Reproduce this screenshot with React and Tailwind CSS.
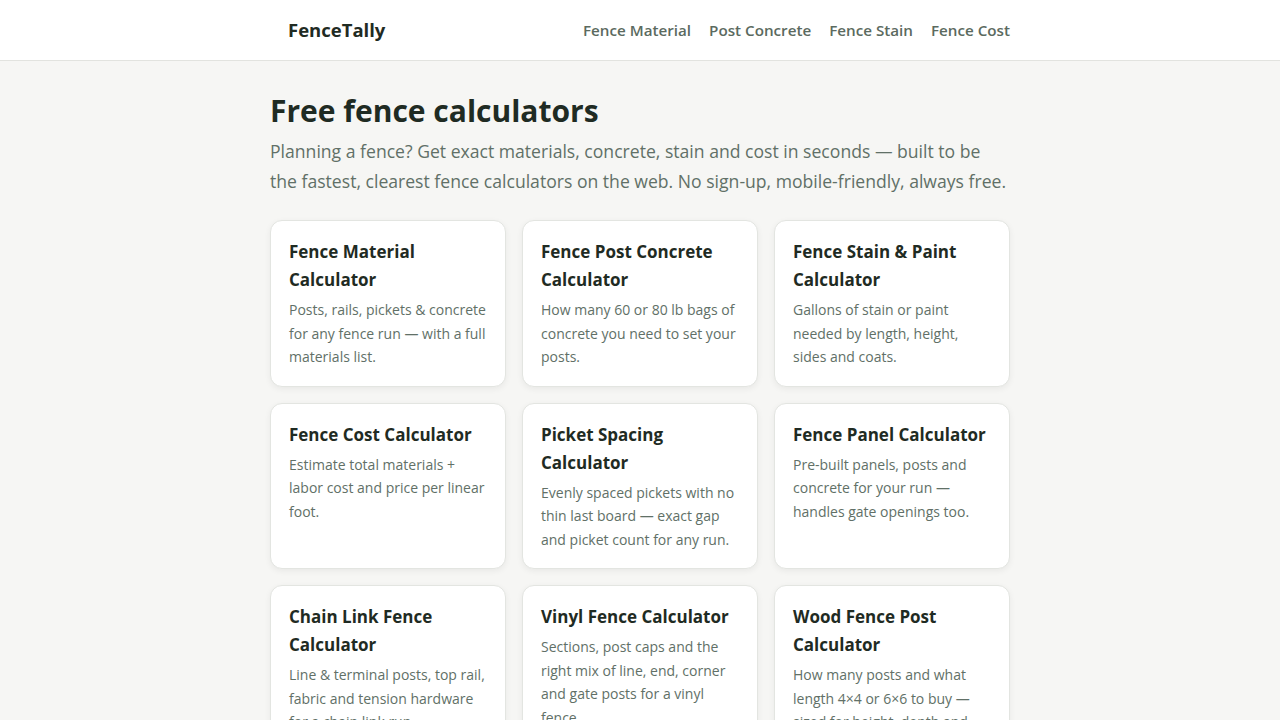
import React from 'react';

const links = ['Fence Material', 'Post Concrete', 'Fence Stain', 'Fence Cost'];

const calculators = [
    {title: 'Fence Material Calculator', desc: 'Posts, rails, pickets & concrete for any fence run — with a full materials list.'},
    {title: 'Fence Post Concrete Calculator', desc: 'How many 60 or 80 lb bags of concrete you need to set your posts.'},
    {title: 'Fence Stain & Paint Calculator', desc: 'Gallons of stain or paint needed by length, height, sides and coats.'},
    {title: 'Fence Cost Calculator', desc: 'Estimate total materials + labor cost and price per linear foot.'},
    {title: 'Picket Spacing Calculator', desc: 'Evenly spaced pickets with no thin last board — exact gap and picket count for any run.'},
    {title: 'Fence Panel Calculator', desc: 'Pre-built panels, posts and concrete for your run — handles gate openings too.'},
    {title: 'Chain Link Fence Calculator', desc: 'Line & terminal posts, top rail, fabric and tension hardware for a chain link run.'},
    {title: 'Vinyl Fence Calculator', desc: 'Sections, post caps and the right mix of line, end, corner and gate posts for a vinyl fence.'},
    {title: 'Wood Fence Post Calculator', desc: 'How many posts and what length 4×4 or 6×6 to buy — sized for height, depth and frost line.'},
];

const CalcCard = ({title, desc}) => {
    return (
        <a href="#" className="block bg-white rounded-xl border border-[#e3e5e1] shadow-[0_2px_6px_rgba(0,0,0,0.06)] px-[18px] pt-[17px] pb-[17px]">
            <h2 className="text-[17px] leading-[28px] font-bold text-[#1f2b23]">{title}</h2>
            <p className="mt-[4px] text-[14px] leading-[23.5px] text-[#617067]">{desc}</p>
        </a>
    );
};

export default function App() {
    return (
        <div className="min-h-screen bg-[#f6f6f4] font-['Open_Sans',sans-serif]">
            <header className="bg-white border-b border-[#e2e3df]">
                <div className="w-[740px] mx-auto h-[60px] flex items-center justify-between pl-[18px]">
                    <a href="#" className="text-[18.5px] font-bold text-[#1f2b23]">FenceTally</a>
                    <nav className="flex items-center gap-[18px]">
                        {links.map((l) => (
                            <a key={l} href="#" className="text-[15.2px] font-semibold text-[#5b6a60]">{l}</a>
                        ))}
                    </nav>
                </div>
            </header>

            <main className="w-[740px] mx-auto pt-[30px] pb-12">
                <h1 className="text-[30px] leading-[40px] font-bold text-[#1f2b23]">Free fence calculators</h1>
                <p className="mt-[5px] text-[17.6px] leading-[30px] text-[#617067]">
                    Planning a fence? Get exact materials, concrete, stain and cost in seconds — built to be the fastest, clearest fence calculators on the web. No sign-up, mobile-friendly, always free.
                </p>
                <div className="mt-[24px] grid grid-cols-3 gap-4">
                    {calculators.map((c) => (
                        <CalcCard key={c.title} title={c.title} desc={c.desc} />
                    ))}
                </div>
            </main>
        </div>
    );
}
